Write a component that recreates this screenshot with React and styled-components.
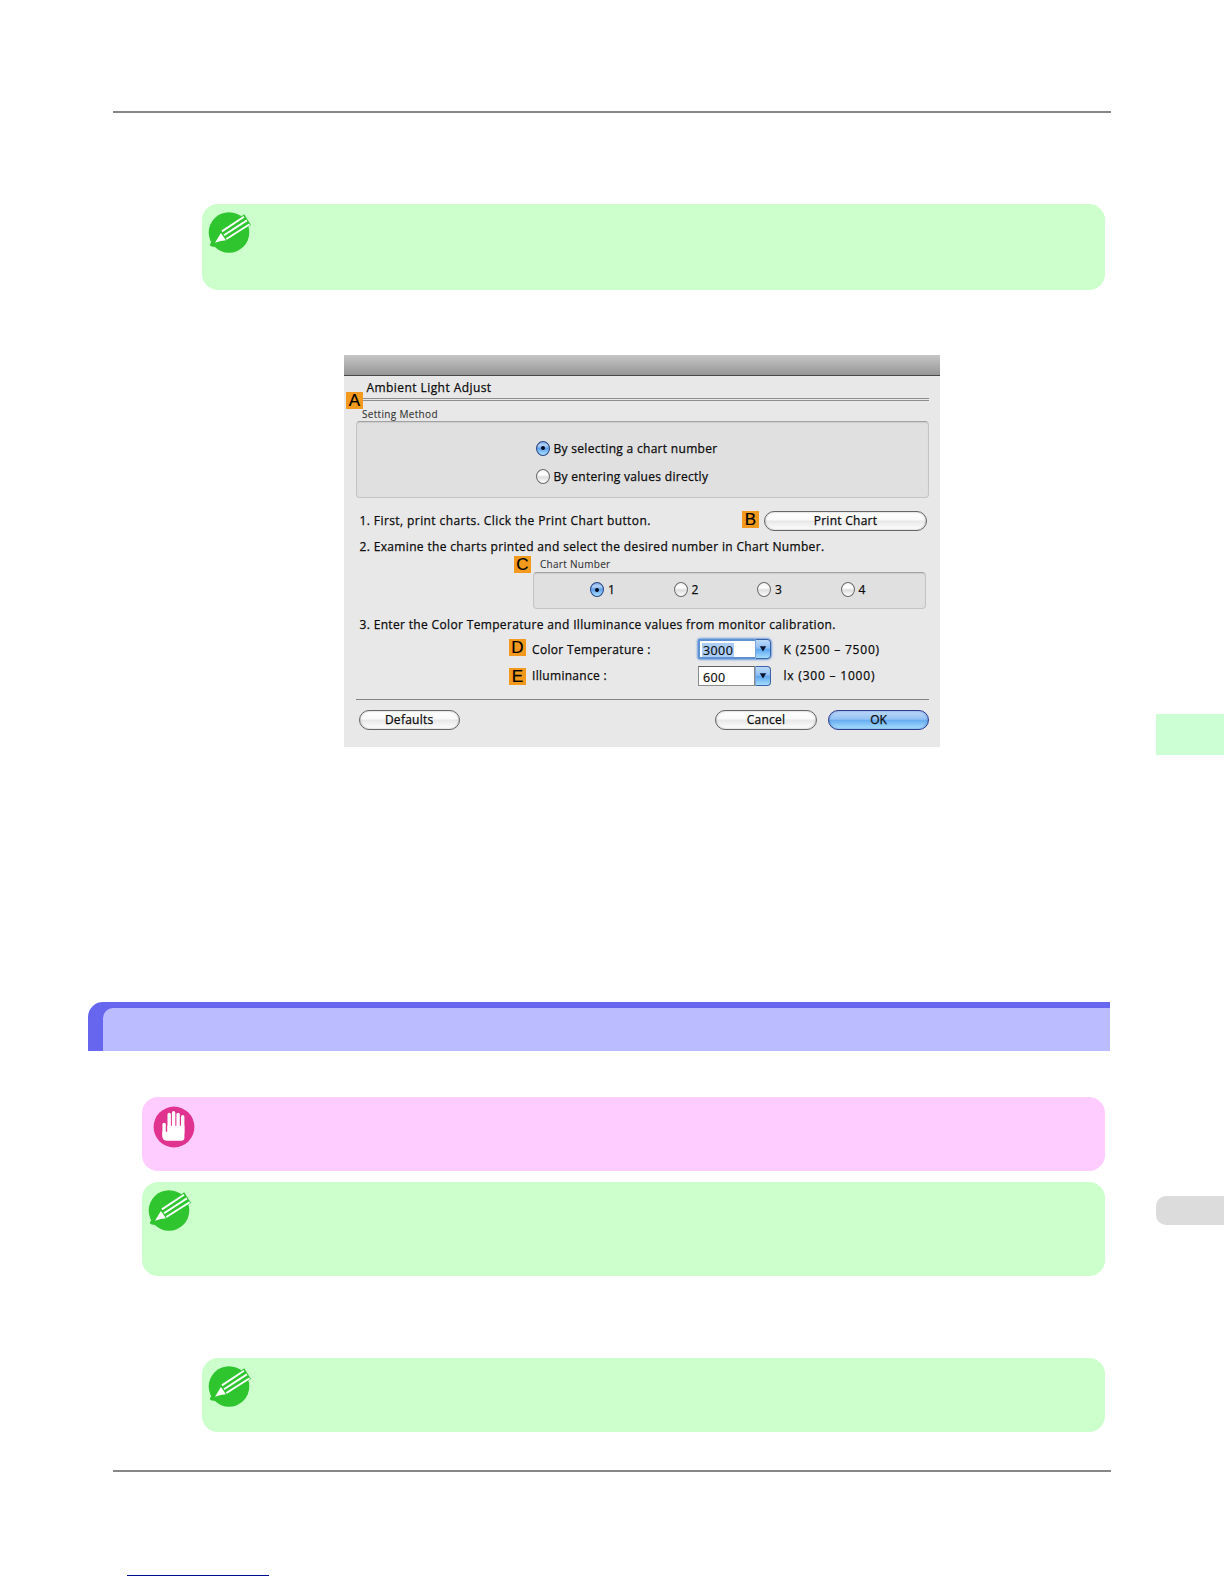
/**
 * Manual page
 * Printed page with note boxes and the Ambient Light Adjust dialog
 *
 */
import React from "react";
import styled, { createGlobalStyle, css } from "styled-components";

const Colors = {
  note: "#ccffcc",
  important: "#ffccff",
  rule: "#878787",
  badge: "#f39a1e",
  dialog: "#e8e8e8"
};

const PencilIcon = () => (
  <svg width="44" height="44" viewBox="0 0 44 44">
    <circle cx="21" cy="21.5" r="20.3" fill="#2fc52f" />
    <path d="M1.6 34 L4 30 L8 36 L3.5 35.6 Z" fill="#2fc52f" />
    <path d="M12 21 L36.2 3.2 L43 14 L18 30 Z" fill="#2fc52f" />
    <path d="M7 31.8 L12.9 21.9 L18 29.2 Q13 29.6 7 31.8 Z" fill="#fff" />
    <g stroke="#fff" strokeWidth="1.9">
      <path d="M13.9 20.4 L36 5.8" />
      <path d="M16 24.2 L38.9 9.4" />
      <path d="M18.4 28 L41.6 13.2" />
    </g>
  </svg>
);

const HandIcon = () => (
  <svg width="42" height="42" viewBox="0 0 42 42">
    <circle cx="21" cy="21" r="20.4" fill="#e0338f" />
    <g stroke="#fff" strokeWidth="3.4" strokeLinecap="round">
      <path d="M11.1 18.5 V30" />
      <path d="M16.2 8.4 V25" />
      <path d="M20.6 6.8 V25" />
      <path d="M25.1 8.4 V25" />
      <path d="M29.7 10.8 V27" />
    </g>
    <path
      d="M9.4 25.7 H14.4 V19.7 H31.4 V31.5 Q31.4 34.7 28.2 34.7 H13.5 Q9.4 34.5 9.4 30 Z"
      fill="#fff"
    />
  </svg>
);

const Option = ({ checked, spacing, drop, children }) => (
  <OptionLabel drop={drop}>
    <Radio checked={checked} />
    <Text spacing={spacing}>{children}</Text>
  </OptionLabel>
);

const ComboBox = ({ value, focused }) => (
  <Combo focused={focused}>
    <ComboValue>
      <Selection active={focused}>{value}</Selection>
    </ComboValue>
    <ComboButton>
      <svg width="8" height="6" viewBox="0 0 8 6">
        <path d="M0.8 0.3 H7.2 L4 5.6 Z" fill="#0a1430" />
      </svg>
    </ComboButton>
  </Combo>
);

const AmbientLightDialog = () => (
  <Dialog>
    <TitleBar />
    <DialogBody>
      <Heading>
        <Text spacing={0.43}>Ambient Light Adjust</Text>
        <HeadingBadge>A</HeadingBadge>
      </Heading>
      <GroupTitle spacing={0.32}>Setting Method</GroupTitle>
      <MethodGroup>
        <Option checked spacing={0.3} drop={2}>
          By selecting a chart number
        </Option>
        <Option spacing={0.3} drop={2}>
          By entering values directly
        </Option>
      </MethodGroup>
      <PrintRow>
        <Text spacing={0.41}>
          1. First, print charts. Click the Print Chart button.
        </Text>
        <PrintActions>
          <Badge>B</Badge>
          <Button width={163}>Print Chart</Button>
        </PrintActions>
      </PrintRow>
      <Step top={7}>
        <Text spacing={0.345}>
          2. Examine the charts printed and select the desired number in Chart
          Number.
        </Text>
      </Step>
      <ChartRow>
        <Badge>C</Badge>
        <div>
          <ChartTitle spacing={0.29}>Chart Number</ChartTitle>
          <ChartGroup>
            {["1", "2", "3", "4"].map(num => {
              return (
                <Option key={num} checked={num === "1"}>
                  {num}
                </Option>
              );
            })}
          </ChartGroup>
        </div>
      </ChartRow>
      <Step top={7}>
        <Text spacing={0.34}>
          3. Enter the Color Temperature and Illuminance values from monitor
          calibration.
        </Text>
      </Step>
      <Field top={5} height={21} line={22}>
        <Badge>D</Badge>
        <FieldLabel spacing={0.32}>Color Temperature :</FieldLabel>
        <ComboBox value="3000" focused />
        <Text spacing={0.78}>K (2500 – 7500)</Text>
      </Field>
      <Field top={6} height={20} line={20} drop={2}>
        <Badge>E</Badge>
        <FieldLabel spacing={0.3}>Illuminance :</FieldLabel>
        <ComboBox value="600" />
        <Text spacing={0.8}>lx (300 – 1000)</Text>
      </Field>
      <Divider />
      <Footer>
        <Button width={101.5}>Defaults</Button>
        <FooterRight>
          <Button width={102}>Cancel</Button>
          <Button width={101} primary>
            OK
          </Button>
        </FooterRight>
      </Footer>
    </DialogBody>
  </Dialog>
);

export default class App extends React.Component {
  render() {
    return (
      <>
        <GlobalStyle />
        <Page>
          <Main>
            <Rule top={111} />
            <Note top={91} left={202} height={86}>
              <PencilIcon />
            </Note>
            <AmbientLightDialog />
            <SectionBar>
              <SectionInner />
            </SectionBar>
            <Note top={46} left={142} height={74} important>
              <HandIcon />
            </Note>
            <Note top={11} left={142} height={94}>
              <PencilIcon />
            </Note>
            <Note top={82} left={202} height={74}>
              <PencilIcon />
            </Note>
            <Rule top={38} />
            <LinkLine />
          </Main>
          <Side>
            <ChapterTab />
            <PageTab />
          </Side>
        </Page>
      </>
    );
  }
}

const GlobalStyle = createGlobalStyle`
  body {
    margin: 0;
    background: #fff;
  }
  *,
  *::after {
    box-sizing: border-box;
  }
  svg {
    display: block;
  }
`;
const Page = styled.div`
  display: flex;
  width: 1224px;
  height: 1584px;
  overflow: hidden;
`;
const Main = styled.div`
  display: flex;
  flex-direction: column;
  width: 1156px;
`;
const Side = styled.div`
  width: 68px;
`;
const ChapterTab = styled.div`
  margin-top: 714px;
  height: 41px;
  background: #ccffd4;
`;
const PageTab = styled.div`
  margin-top: 441px;
  height: 29px;
  background: #dcdcdc;
  border-radius: 10px 0 0 10px;
`;
const Rule = styled.div`
  width: 998px;
  height: 2px;
  margin-top: ${props => props.top}px;
  margin-left: 113px;
  background: ${Colors.rule};
`;
const Note = styled.div.withConfig({
  shouldForwardProp: prop =>
    !["top", "left", "height", "important"].includes(prop)
})`
  width: ${props => 1105 - props.left}px;
  height: ${props => props.height}px;
  margin-top: ${props => props.top}px;
  margin-left: ${props => props.left}px;
  padding: ${props => (props.important ? "9px 11px" : "7px 6px")};
  background: ${props => (props.important ? Colors.important : Colors.note)};
  border-radius: 16px;
`;
const SectionBar = styled.div`
  width: 1022px;
  height: 49px;
  margin-top: 255px;
  margin-left: 88px;
  padding: 6px 0 0 15px;
  background: #6666ee;
  border-radius: 15px 0 0 0;
`;
const SectionInner = styled.div`
  height: 43px;
  background: #bbbbff;
  border-radius: 10px 0 0 0;
`;
const LinkLine = styled.div`
  width: 142px;
  height: 1px;
  margin-top: 103px;
  margin-left: 127px;
  background: #00108c;
`;

const Dialog = styled.div`
  width: 596px;
  height: 392px;
  margin-top: 65px;
  margin-left: 344px;
  background: ${Colors.dialog};
  color: #0c0c0c;
  font-family: "Open Sans", "Noto Sans", sans-serif;
  font-size: 12px;
`;
const TitleBar = styled.div`
  height: 21px;
  background: linear-gradient(#c6c6c6, #969696);
  border-bottom: 1px solid #484848;
`;
const DialogBody = styled.div`
  padding: 0 11px 0 12px;
`;
const Text = styled.span.withConfig({
  shouldForwardProp: prop => prop !== "spacing"
})`
  letter-spacing: ${props => props.spacing || 0}px;
  line-height: 18px;
  white-space: nowrap;
  -webkit-text-stroke: 0.25px #0c0c0c;
`;
const Badge = styled.div`
  flex: none;
  width: 17px;
  height: 17px;
  background: ${Colors.badge};
  color: #000;
  font-family: "Liberation Sans", Arial, sans-serif;
  font-size: 17px;
  line-height: 18px;
  text-align: center;
  -webkit-text-stroke: 0.2px #000;
`;
const Heading = styled.div`
  position: relative;
  display: flex;
  align-items: center;
  height: 25px;
  padding: 0 0 1px 10.5px;
  &::after {
    content: "";
    position: absolute;
    right: 0;
    bottom: 0;
    left: 7px;
    height: 3px;
    border: solid #8e8e8e;
    border-width: 1px 0;
  }
`;
const HeadingBadge = styled(Badge)`
  position: absolute;
  top: 16px;
  left: -10px;
  z-index: 1;
`;
const GroupTitle = styled(Text)`
  display: block;
  height: 13px;
  margin-top: 7px;
  padding-left: 6px;
  color: #333;
  font-size: 10px;
  line-height: 13px;
  -webkit-text-stroke: 0.1px #333;
`;
const groupFrame = css`
  background: #e0e0e0;
  border: 1px solid #c4c4c4;
  border-top-color: #a2a2a2;
  border-radius: 4px;
  box-shadow: inset 0 1px 1px rgba(0, 0, 0, 0.08);
`;
const MethodGroup = styled.div`
  ${groupFrame}
  height: 77px;
  padding: 12px 0 0 178.5px;
`;
const OptionLabel = styled.label.withConfig({
  shouldForwardProp: prop => prop !== "drop"
})`
  display: flex;
  align-items: center;
  gap: 4px;
  height: 28px;
  > ${Text} {
    padding-top: ${props => props.drop || 0}px;
  }
`;
const Radio = styled.span.withConfig({
  shouldForwardProp: prop => prop !== "checked"
})`
  display: flex;
  align-items: center;
  justify-content: center;
  width: 14px;
  height: 15px;
  border: 1px solid ${props => (props.checked ? "#2a4685" : "#6c6c6c")};
  border-radius: 50%;
  background: ${props =>
    props.checked
      ? "linear-gradient(#7fa9e6 0%, #b4d3f7 25%, #5fa0ea 50%, #a8e2ff 100%)"
      : "linear-gradient(#f4f4f4 0%, #fff 35%, #dedede 55%, #fff 100%)"};
  &::after {
    content: "";
    width: 4px;
    height: 4px;
    border-radius: 50%;
    background: ${props => (props.checked ? "#060c20" : "transparent")};
  }
`;
const PrintRow = styled.div`
  display: flex;
  align-items: center;
  justify-content: space-between;
  height: 20px;
  margin-top: 13px;
  padding: 0 2px 0 3.5px;
`;
const PrintActions = styled.div`
  display: flex;
  gap: 5px;
`;
const Button = styled.button.withConfig({
  shouldForwardProp: prop => !["width", "primary"].includes(prop)
})`
  width: ${props => props.width}px;
  height: 20px;
  padding: 0 0 1px;
  border: 1px solid ${props => (props.primary ? "#2d3c8c" : "#666")};
  border-radius: 10px;
  background: ${props =>
    props.primary
      ? "linear-gradient(#bcd8f8 0%, #94c2f5 45%, #69adf0 52%, #a9e0ff 100%)"
      : "linear-gradient(#fff 0%, #fafafa 42%, #e8e8e8 52%, #fff 100%)"};
  box-shadow: inset 0 0 2px
    ${props =>
      props.primary ? "rgba(20, 60, 160, 0.5)" : "rgba(0, 0, 0, 0.35)"};
  color: #0c0c0c;
  font-family: inherit;
  font-size: 12px;
  line-height: 16px;
  letter-spacing: ${props => (props.primary ? 0 : 0.27)}px;
  -webkit-text-stroke: 0.25px #0c0c0c;
`;
const Step = styled.div`
  display: flex;
  height: 18px;
  margin-top: ${props => props.top}px;
  padding-left: 3.5px;
`;
const ChartRow = styled.div`
  display: flex;
  gap: 2px;
  padding-left: 158px;
`;
const ChartTitle = styled(GroupTitle)`
  height: 16px;
  margin-top: 0;
  padding: 2px 0 0 7px;
`;
const ChartGroup = styled.div`
  ${groupFrame}
  display: grid;
  grid-template-columns: repeat(4, 83.5px);
  align-items: center;
  width: 393px;
  height: 37px;
  padding: 0 0 2px 56px;
`;
const Field = styled.div.withConfig({
  shouldForwardProp: prop => !["top", "height", "line", "drop"].includes(prop)
})`
  display: flex;
  height: ${props => props.height}px;
  margin-top: ${props => props.top}px;
  padding-left: 153px;
  line-height: ${props => props.line}px;
  > ${Badge} {
    margin-top: ${props => props.drop || 0}px;
    line-height: 18px;
  }
  > ${Text} {
    margin-left: 12.5px;
    line-height: inherit;
  }
`;
const FieldLabel = styled.span`
  width: 165px;
  padding-left: 6px;
  letter-spacing: ${props => props.spacing}px;
  white-space: nowrap;
  -webkit-text-stroke: 0.25px #0c0c0c;
`;
const Combo = styled.div.withConfig({
  shouldForwardProp: prop => prop !== "focused"
})`
  display: flex;
  width: 73px;
  height: 20px;
  margin-left: 7px;
  border-radius: 0 4px 4px 0;
  ${props =>
    props.focused &&
    css`
      border-radius: 3px 4px 4px 3px;
      box-shadow: 0 0 2px 1px #6f9fdc;
    `}
  > :first-child {
    border-color: ${props =>
      props.focused ? "#5f92d4" : "#5c5c5c #8c8c8c #8c8c8c"};
    border-width: ${props => (props.focused ? "2px 0 2px 2px" : "1px")};
    padding: ${props => (props.focused ? "2px 0 0 2px" : "3px 0 0 3px")};
  }
`;
const ComboValue = styled.div`
  flex: 1;
  border-style: solid;
  background: #fff;
`;
const Selection = styled.span.withConfig({
  shouldForwardProp: prop => prop !== "active"
})`
  display: block;
  width: 32px;
  height: 14px;
  padding-left: 1px;
  background: ${props => (props.active ? "#abcdf8" : "transparent")};
  font-size: 12.5px;
  line-height: 15px;
  letter-spacing: 0.4px;
  -webkit-text-stroke: 0.2px #0c0c0c;
`;
const ComboButton = styled.div`
  display: flex;
  align-items: center;
  justify-content: center;
  width: 16px;
  border: 1px solid #3c62ae;
  border-left-color: #7aa4dc;
  border-radius: 0 4px 4px 0;
  background: linear-gradient(#bcd9f8 0%, #8ebef4 45%, #5ea6ee 52%, #a4dcff 100%);
`;
const Divider = styled.div`
  height: 1px;
  margin-top: 13px;
  background: #858585;
`;
const Footer = styled.div`
  display: flex;
  justify-content: space-between;
  margin-top: 10px;
  padding-left: 2.5px;
`;
const FooterRight = styled.div`
  display: flex;
  gap: 11px;
`;
